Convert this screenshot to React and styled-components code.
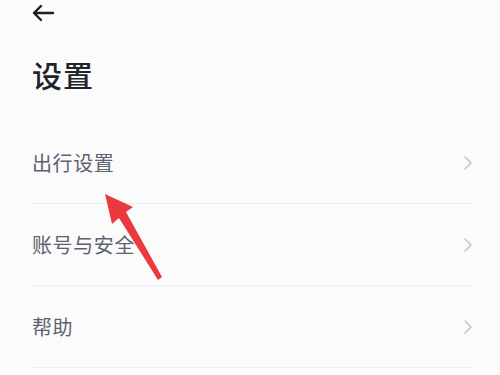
import styled, { createGlobalStyle } from "styled-components"

const Global = createGlobalStyle`
    html, body {
        margin: 0;
        padding: 0;
        background: #fbfbfc;
    }
    body {
        font-family: "Noto Sans CJK SC", "Noto Sans", sans-serif;
    }
`

const Page = styled.div`
    position: relative;
    width: 500px;
    height: 375px;
    overflow: hidden;
    background: #fbfbfc;
`

const TopBar = styled.div`
    height: 26px;
    padding-left: 31px;
    display: flex;
    align-items: center;
`

const Title = styled.h1`
    margin: 0;
    padding: 0 32px;
    height: 96px;
    display: flex;
    align-items: center;
    font-size: 30px;
    font-weight: 500;
    color: #222428;
    letter-spacing: 1px;
`

const List = styled.ul`
    list-style: none;
    margin: 0;
    padding: 0 27px 0 32px;
`

const Row = styled.li`
    height: 81px;
    display: flex;
    align-items: center;
    justify-content: space-between;
    border-bottom: 1px solid #eceef1;
`

const Label = styled.span`
    font-size: 20px;
    color: #5d6270;
    letter-spacing: 0.6px;
`

const Overlay = styled.svg`
    position: absolute;
    left: 0;
    top: 0;
    pointer-events: none;
`

const Chevron = () => (
    <svg width="10" height="16" viewBox="0 0 10 16">
        <path d="M2 2 L8 8 L2 14" fill="none" stroke="#c3c5cb" strokeWidth="1.6" strokeLinecap="round" strokeLinejoin="round" />
    </svg>
)

const items = ["出行设置", "账号与安全", "帮助"]

export default function App() {
    return (
        <Page>
            <Global />
            <TopBar>
                <svg width="24" height="18" viewBox="0 0 24 18">
                    <path d="M22 9 H3 M10 2 L3 9 L10 16" fill="none" stroke="#1e1f22" strokeWidth="2.4" strokeLinecap="round" strokeLinejoin="round" />
                </svg>
            </TopBar>
            <Title>设置</Title>
            <List>
                {items.map((t) => (
                    <Row key={t}>
                        <Label>{t}</Label>
                        <Chevron />
                    </Row>
                ))}
            </List>
            <Overlay width="500" height="375" viewBox="0 0 500 375">
                <path d="M105 194 L133 207 L126 212 L162 277 L158 280 L119 218 L112 224 Z" fill="#ea3a40" />
            </Overlay>
        </Page>
    )
}
